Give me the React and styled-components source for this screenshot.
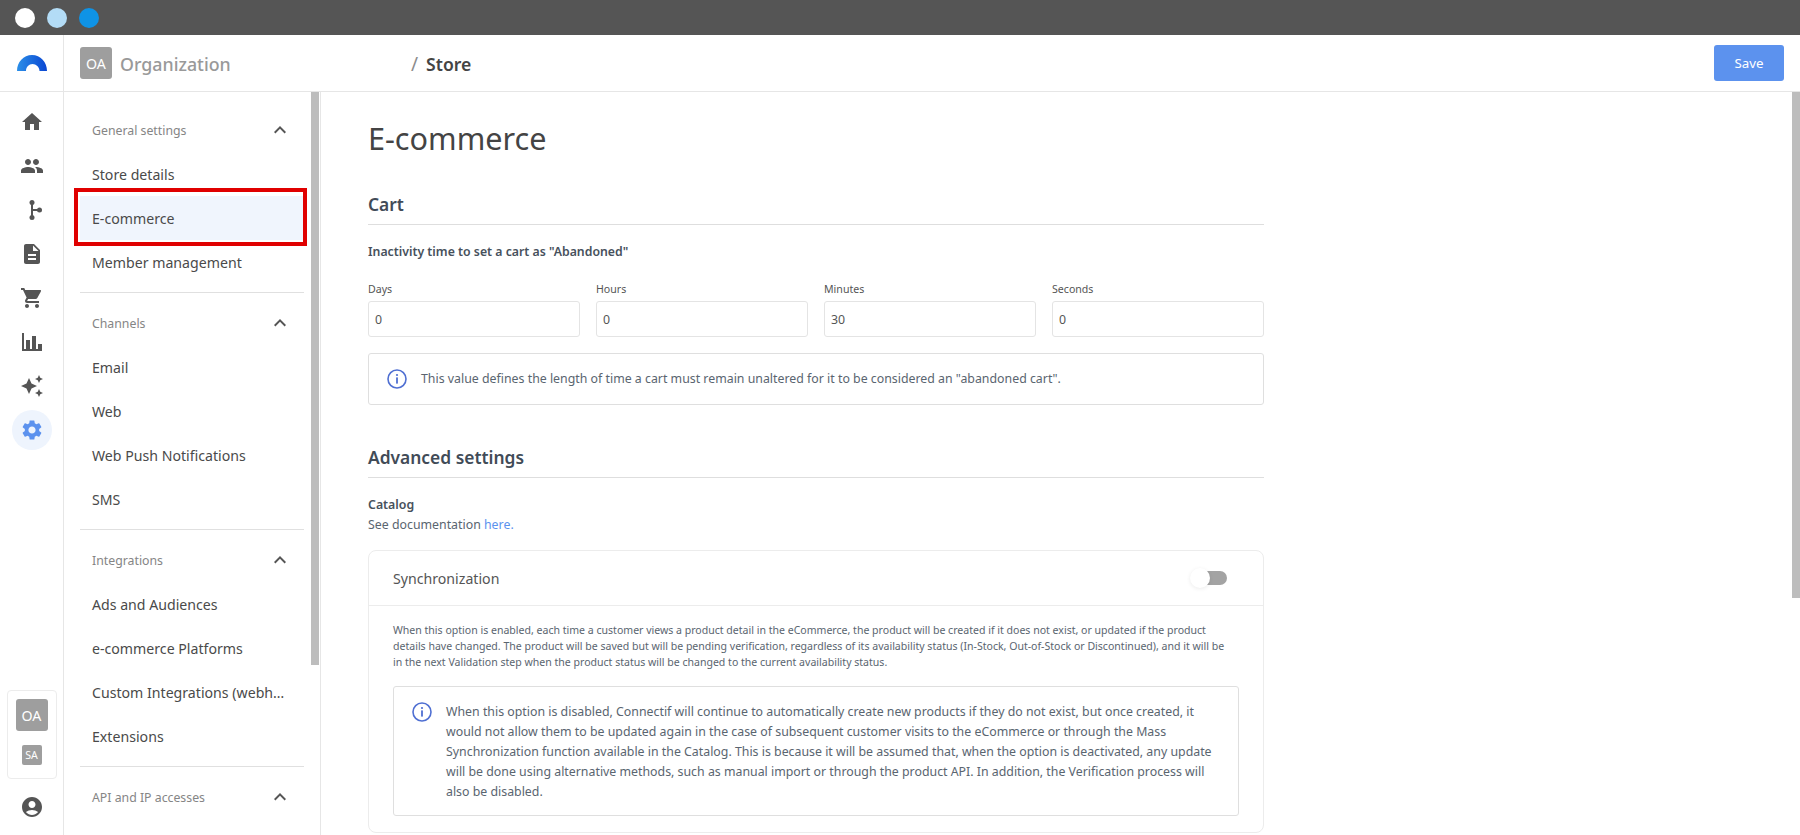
import React from "react";
import styled, { createGlobalStyle } from "styled-components";
import {
  MdHome, MdPeople, MdDescription, MdShoppingCart, MdAutoAwesome, MdSettings, MdAccountCircle, MdExpandLess,
} from "react-icons/md";

const Global = createGlobalStyle`
  html, body { margin: 0; padding: 0; height: 100%; background: #fff; }
  body { font-family: "Noto Sans", "Open Sans", sans-serif; color: #4a4a4a; overflow: hidden; }
  * { box-sizing: border-box; }
`;

const Page = styled.div`display:flex;flex-direction:column;width:1800px;height:835px;overflow:hidden;`;
const TopBar = styled.div`height:35px;background:#555;display:flex;align-items:center;gap:12px;padding:0 15px;flex:none;`;
const Dot = styled.span`width:20px;height:20px;border-radius:50%;background:${p => p.$c};`;
const Shell = styled.div`flex:1;display:flex;min-height:0;`;
const Rail = styled.nav`width:64px;flex:none;border-right:1px solid #e6e6e6;display:flex;flex-direction:column;align-items:center;`;
const LogoCell = styled.div`width:63px;height:57px;border-bottom:1px solid #e6e6e6;display:flex;align-items:center;justify-content:center;flex:none;`;
const RailList = styled.div`display:flex;flex-direction:column;align-items:center;padding-top:8px;flex:1;`;
const RailBtn = styled.div`
  width:40px;height:44px;display:flex;align-items:center;justify-content:center;color:#555;font-size:24px;
  ${p => p.$active && `color:#5c92ee;`}
`;
const ActiveDisc = styled.span`width:40px;height:40px;border-radius:50%;background:#eef4fd;display:flex;align-items:center;justify-content:center;`;
const Accounts = styled.div`width:50px;height:89px;border:1px solid #ececec;border-radius:4px;display:flex;flex-direction:column;align-items:center;padding-top:8px;flex:none;`;
const Avatar = styled.span`
  width:${p => p.$s}px;height:${p => p.$s}px;background:#9e9e9e;color:#fff;border-radius:${p => p.$s > 24 ? 3 : 2}px;flex:none;
  display:flex;align-items:center;justify-content:center;font-size:${p => p.$s > 24 ? 14.2 : 10.6}px;
`;
const SmallAvatarWrap = styled.span`margin-top:14px;display:flex;`;
const UserBtn = styled.div`height:56px;display:flex;align-items:center;justify-content:center;color:#555;font-size:24px;flex:none;`;
const Right = styled.div`flex:1;min-width:0;display:flex;flex-direction:column;`;
const Header = styled.header`height:57px;flex:none;border-bottom:1px solid #e6e6e6;display:flex;align-items:center;padding:0 16px;`;
const Org = styled.div`width:331px;display:flex;align-items:center;gap:8px;flex:none;`;
const OrgName = styled.span`font-size:17.8px;color:#999;font-weight:500;line-height:26px;padding-top:2px;`;
const Slash = styled.span`color:#8c8c8c;font-size:19px;margin-right:8px;line-height:26px;padding-top:2px;`;
const Crumb = styled.span`font-size:17.6px;font-weight:600;color:#444;flex:1;line-height:26px;padding-top:2px;`;
const SaveBtn = styled.button`width:70px;height:36px;border:none;border-radius:3px;background:#5c92ee;color:#fff;font:400 13.3px "Noto Sans",sans-serif;`;
const Body = styled.div`flex:1;display:flex;min-height:0;`;

const Thumb = styled.span`position:absolute;top:0;right:${p => p.$right}px;width:8px;height:${p => p.$h}px;background:#bdbdbd;`;
const Sidebar = styled.aside`
  width:257px;flex:none;border-right:1px solid #e6e6e6;overflow:hidden;padding:16px 16px 0 16px;position:relative;
`;
const Section = styled.section`
  & + & { border-top:1px solid #e0e0e0;margin-top:8px;padding-top:8px; }
`;
const SectionHead = styled.div`
  height:44px;display:flex;align-items:center;justify-content:space-between;padding:0 0 0 12px;color:#858585;font-size:12.3px;
  svg { font-size:24px;color:#555;margin-right:12px; }
`;
const Item = styled.div`
  height:44px;padding:0 12px;display:block;line-height:46px;font-size:14.15px;color:#4a4a4a;position:relative;
  white-space:nowrap;overflow:hidden;text-overflow:ellipsis;
  ${p => p.$active && `background:#f0f5fd;overflow:visible;`}
`;
const Highlight = styled.span`position:absolute;left:-6px;right:-3px;top:-8px;bottom:-6px;border:4px solid #e00000;pointer-events:none;`;

const Main = styled.main`flex:1;min-width:0;overflow:hidden;padding:0 0 0 47px;position:relative;`;
const Content = styled.div`width:896px;`;
const Title = styled.h1`margin:0;padding-top:23px;height:82px;font-size:30.6px;font-weight:400;color:#444;line-height:46px;`;
const SectionTitle = styled.h2`
  margin:0;height:${p => p.$h || 50}px;border-bottom:1px solid #dedede;font-size:17.4px;font-weight:600;color:#414b57;
  display:flex;align-items:flex-end;line-height:27px;padding-bottom:6px;
`;
const Lead = styled.div`font-size:12.3px;font-weight:600;color:#47515c;line-height:20px;margin-top:17px;`;
const Fields = styled.div`display:grid;grid-template-columns:repeat(4,1fr);gap:16px;margin-top:17px;`;
const Field = styled.label`display:flex;flex-direction:column;font-size:10.6px;color:#555;line-height:20px;`;
const FieldInput = styled.input`
  height:36px;margin-top:2px;width:100%;border:1px solid #e4e4e4;border-radius:3px;padding:0 6px;outline:none;color:#555;
  font:400 12.35px "Noto Sans",sans-serif;background:#fff;
`;
const Notice = styled.div`
  border:1px solid #dfdfdf;border-radius:3px;display:flex;align-items:${p => p.$top ? "flex-start" : "center"};
  margin-top:16px;padding:${p => p.$pad};gap:14px;font-size:12.35px;line-height:20px;color:#5a6570;
  svg { flex:none; }
`;
const NoticeText = styled.div`flex:1;`;
const Block = styled.div`margin-top:17px;font-size:12.35px;line-height:20px;color:#5a6570;`;
const Strong = styled.div`font-weight:600;color:#47515c;`;
const Link = styled.a`color:#5c92ee;`;
const Card = styled.div`margin-top:15px;border:1px solid #ececec;border-radius:8px;padding-bottom:16px;`;
const CardHead = styled.div`height:55px;border-bottom:1px solid #ececec;display:flex;align-items:center;justify-content:space-between;padding:0 36px 0 24px;`;
const CardTitle = styled.span`font-size:14.15px;color:#555;`;
const Switch = styled.span`position:relative;width:20px;height:14px;background:#a3a3a3;border-radius:0 7px 7px 0;display:block;`;
const Knob = styled.span`position:absolute;left:-17px;top:-3px;width:20px;height:20px;border-radius:50%;background:#fff;box-shadow:0 1px 4px rgba(0,0,0,.08);`;
const CardBody = styled.div`padding:16px 24px 0;`;
const Desc = styled.p`margin:0;padding-right:6px;font-size:10.55px;line-height:16px;color:#5a6570;`;

const InfoIcon = () => (
  <svg width="20" height="20" viewBox="0 0 20 20" fill="none">
    <circle cx="10" cy="10" r="9" stroke="#4f6fd2" strokeWidth="1.6" />
    <circle cx="10" cy="6" r="1.1" fill="#4f6fd2" />
    <rect x="9.1" y="8.4" width="1.8" height="6.2" fill="#4f6fd2" />
  </svg>
);
const Logo = () => (
  <svg width="32" height="16" viewBox="0 0 32 16">
    <defs>
      <linearGradient id="lg" x1="0" x2="1" y1="0" y2="0">
        <stop offset="0" stopColor="#2b8fe8" />
        <stop offset="1" stopColor="#0a46d2" />
      </linearGradient>
    </defs>
    <path d="M1 16C1 7 7.5 0 16 0s15 7 15 16H23.5C23.5 12 20 9 16.5 9S10 12 10 16Z" fill="url(#lg)" />
  </svg>
);
const BranchIcon = () => (
  <svg width="24" height="24" viewBox="0 0 24 24" fill="#555">
    <circle cx="12" cy="4.5" r="2.5" /><circle cx="12" cy="19.5" r="2.5" /><circle cx="19.5" cy="12" r="2.5" />
    <path d="M11 5h2v14h-2z" /><path d="M12 11h7v2h-7z" />
  </svg>
);
const BarsIcon = () => (
  <svg width="24" height="24" viewBox="0 0 24 24" fill="#555">
    <path d="M2 3h2v18H2zM6 10h4v11H6zM12 6h4v15h-4zM18 14h4v7h-4zM2 19h20v2H2z" />
  </svg>
);

const nav = [
  { title: "General settings", items: ["Store details", "E-commerce", "Member management"] },
  { title: "Channels", items: ["Email", "Web", "Web Push Notifications", "SMS"] },
  { title: "Integrations", items: ["Ads and Audiences", "e-commerce Platforms", "Custom Integrations (webhooks)", "Extensions"] },
  { title: "API and IP accesses", items: [] },
];

export default function App() {
  return (
    <Page>
      <Global />
      <TopBar>
        <Dot $c="#fff" /><Dot $c="#b3dcf6" /><Dot $c="#0f93e6" />
      </TopBar>
      <Shell>
        <Rail>
          <LogoCell><Logo /></LogoCell>
          <RailList>
            <RailBtn><MdHome /></RailBtn>
            <RailBtn><MdPeople /></RailBtn>
            <RailBtn><BranchIcon /></RailBtn>
            <RailBtn><MdDescription /></RailBtn>
            <RailBtn><MdShoppingCart /></RailBtn>
            <RailBtn><BarsIcon /></RailBtn>
            <RailBtn><MdAutoAwesome /></RailBtn>
            <RailBtn $active><ActiveDisc><MdSettings /></ActiveDisc></RailBtn>
          </RailList>
          <Accounts>
            <Avatar $s={32}>OA</Avatar>
            <SmallAvatarWrap><Avatar $s={20}>SA</Avatar></SmallAvatarWrap>
          </Accounts>
          <UserBtn><MdAccountCircle /></UserBtn>
        </Rail>
        <Right>
          <Header>
            <Org><Avatar $s={32}>OA</Avatar><OrgName>Organization</OrgName></Org>
            <Slash>/</Slash>
            <Crumb>Store</Crumb>
            <SaveBtn>Save</SaveBtn>
          </Header>
          <Body>
            <Sidebar>
              {nav.map(s => (
                <Section key={s.title}>
                  <SectionHead>{s.title}<MdExpandLess /></SectionHead>
                  {s.items.map(i => (
                    <Item key={i} $active={i === "E-commerce"}>
                      {i}{i === "E-commerce" && <Highlight />}
                    </Item>
                  ))}
                </Section>
              ))}
              <Thumb $right={1} $h={573} />
            </Sidebar>
            <Main>
              <Content>
                <Title>E-commerce</Title>
                <SectionTitle $h={51}>Cart</SectionTitle>
                <Lead>Inactivity time to set a cart as "Abandoned"</Lead>
                <Fields>
                  {[["Days", "0"], ["Hours", "0"], ["Minutes", "30"], ["Seconds", "0"]].map(([l, v]) => (
                    <Field key={l}>{l}<FieldInput defaultValue={v} /></Field>
                  ))}
                </Fields>
                <Notice $pad="15px 18px 15px 18px">
                  <InfoIcon />
                  <NoticeText>This value defines the length of time a cart must remain unaltered for it to be considered an "abandoned cart".</NoticeText>
                </Notice>
                <SectionTitle $h={73}>Advanced settings</SectionTitle>
                <Block>
                  <Strong>Catalog</Strong>
                  See documentation <Link>here.</Link>
                </Block>
                <Card>
                  <CardHead>
                    <CardTitle>Synchronization</CardTitle>
                    <Switch><Knob /></Switch>
                  </CardHead>
                  <CardBody>
                    <Desc>When this option is enabled, each time a customer views a product detail in the eCommerce, the product will be created if it does not exist, or updated if the product details have changed. The product will be saved but will be pending verification, regardless of its availability status (In-Stock, Out-of-Stock or Discontinued), and it will be in the next Validation step when the product status will be changed to the current availability status.</Desc>
                    <Notice $top $pad="15px 18px 13px 18px">
                      <InfoIcon />
                      <NoticeText>When this option is disabled, Connectif will continue to automatically create new products if they do not exist, but once created, it would not allow them to be updated again in the case of subsequent customer visits to the eCommerce or through the Mass Synchronization function available in the Catalog. This is because it will be assumed that, when the option is deactivated, any update will be done using alternative methods, such as manual import or through the product API. In addition, the Verification process will also be disabled.</NoticeText>
                    </Notice>
                  </CardBody>
                </Card>
              </Content>
              <Thumb $right={0} $h={506} />
            </Main>
          </Body>
        </Right>
      </Shell>
    </Page>
  );
}
